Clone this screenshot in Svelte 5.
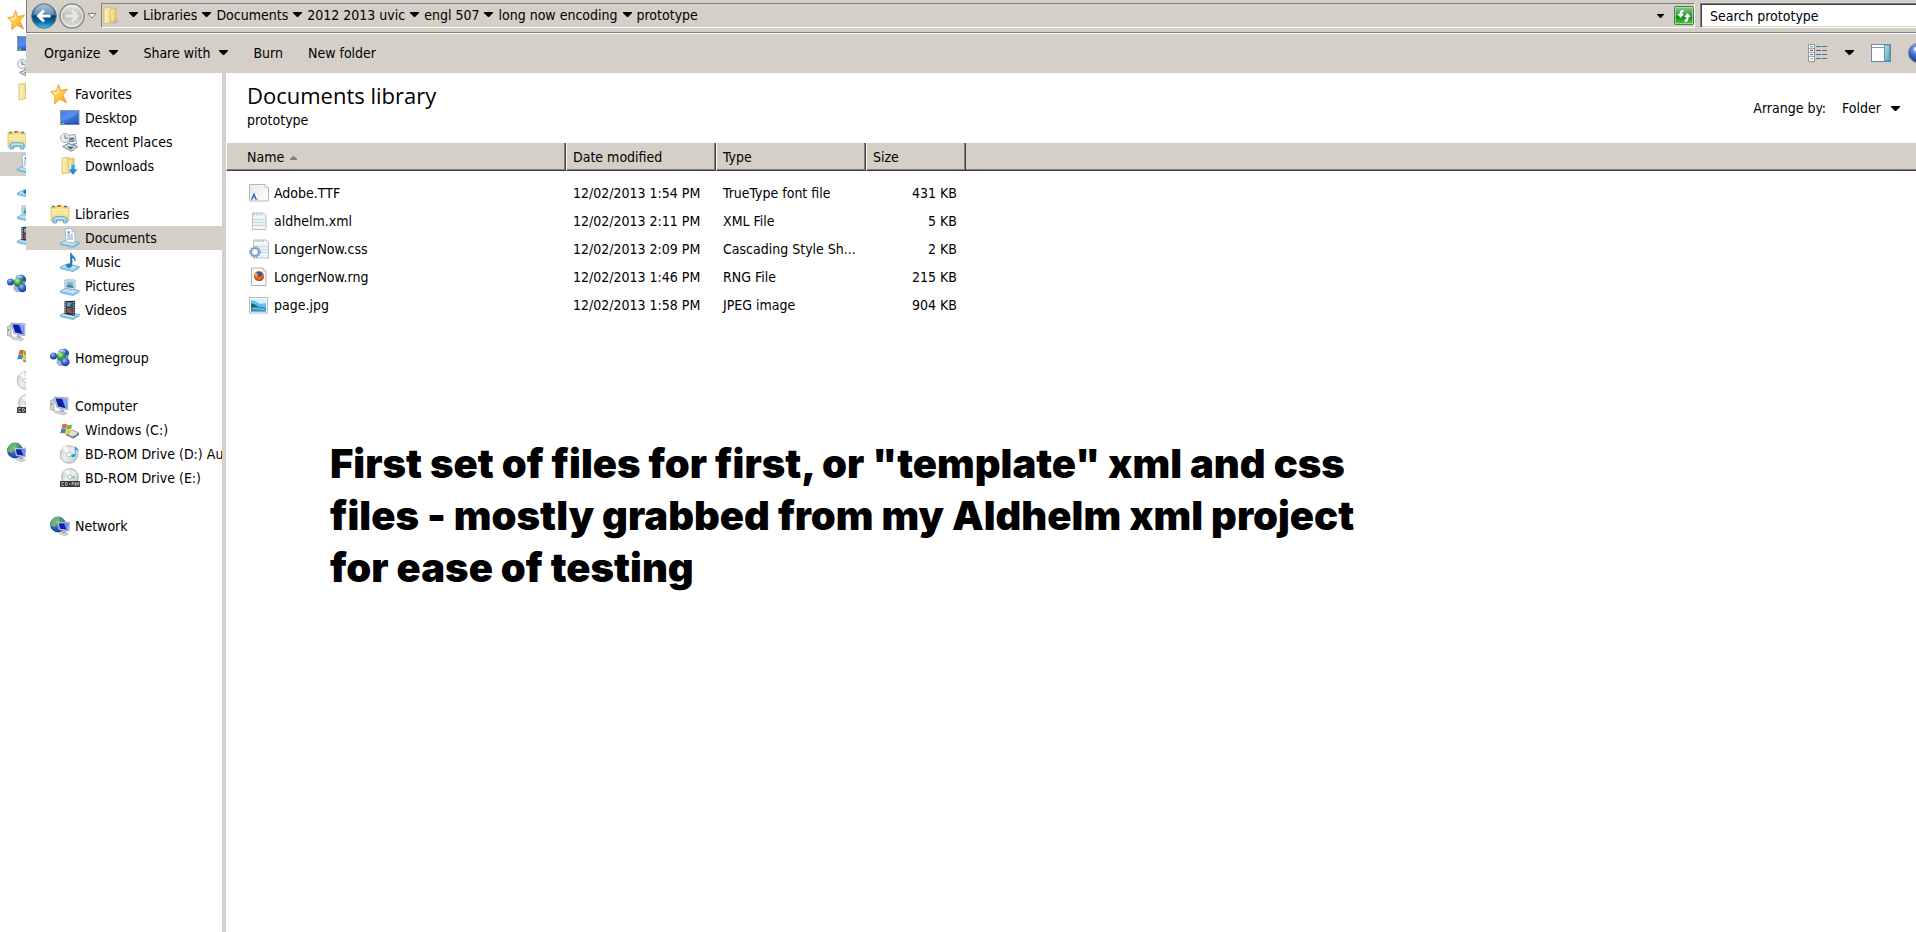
<script>
  const groups = [
    { icon: 'star', label: 'Favorites', items: [
      { icon: 'desktop', label: 'Desktop' },
      { icon: 'recent', label: 'Recent Places' },
      { icon: 'downloads', label: 'Downloads' } ] },
    { icon: 'libraries', label: 'Libraries', items: [
      { icon: 'documents', label: 'Documents', selected: true },
      { icon: 'music', label: 'Music' },
      { icon: 'pictures', label: 'Pictures' },
      { icon: 'videos', label: 'Videos' } ] },
    { icon: 'homegroup', label: 'Homegroup', items: [] },
    { icon: 'computer', label: 'Computer', items: [
      { icon: 'drive', label: 'Windows (C:)' },
      { icon: 'audiodisc', label: 'BD-ROM Drive (D:) Au' },
      { icon: 'cdrom', label: 'BD-ROM Drive (E:)' } ] },
    { icon: 'network', label: 'Network', items: [] }
  ];
  const crumbs = ['Libraries', 'Documents', '2012 2013 uvic', 'engl 507', 'long now encoding', 'prototype'];
  const files = [
    { icon: 'ttf', name: 'Adobe.TTF', date: '12/02/2013 1:54 PM', type: 'TrueType font file', size: '431 KB' },
    { icon: 'xml', name: 'aldhelm.xml', date: '12/02/2013 2:11 PM', type: 'XML File', size: '5 KB' },
    { icon: 'css', name: 'LongerNow.css', date: '12/02/2013 2:09 PM', type: 'Cascading Style Sh...', size: '2 KB' },
    { icon: 'rng', name: 'LongerNow.rng', date: '12/02/2013 1:46 PM', type: 'RNG File', size: '215 KB' },
    { icon: 'jpg', name: 'page.jpg', date: '12/02/2013 1:58 PM', type: 'JPEG image', size: '904 KB' }
  ];
  const note = [
    'First set of files for first, or "template" xml and css',
    'files - mostly grabbed from my Aldhelm xml project',
    'for ease of testing'
  ];
</script>

{#snippet caret()}
  <svg class="caret" viewBox="0 0 9 5" aria-hidden="true"><path d="M0 0h9v1L5 5H4L0 1z" fill="#000" /></svg>
{/snippet}

{#snippet tray()}
  <path d="M0 15.500L6 12.200L19.500 14.500L13 18.500z" fill="#b9e3f7" stroke="#5fa3cc" stroke-width=".8" />
  <path d="M0 16l13 3 6.500-4v1.300L13 20 0 17z" fill="#6db4dc" />
{/snippet}

{#snippet icon(name)}
  <svg class="icon" viewBox="0 0 20 20" aria-hidden="true">
    {#if name === 'star'}
      <path d="M8.500.5l2.300 6.100 6.700-1.500-4.600 6 3.600 7.700-6.600-3.600-5.400 4.600.7-7.600L.5 7.600l6.100-.8z" fill="url(#gStar)" stroke="#e89a32" stroke-width=".9" stroke-linejoin="round" />
      <path d="M8.500 3.500l1.300 4.700-4.500 2.800-2.600-2.500 4.500-.6z" fill="#fff2a8" opacity=".75" />
    {:else if name === 'desktop'}
      <rect x=".5" y="2.500" width="18.500" height="14" fill="url(#gScreen)" stroke="#8c96a8" />
      <path d="M1 13C7 12 13 9 18.500 4V3H1z" fill="#8db8ff" opacity=".35" />
      <path d="M1 15.500h18" stroke="#27509c" stroke-width="1.500" /><path d="M1.500 15.500h3" stroke="#67d05d" stroke-width="1.500" />
    {:else if name === 'recent'}
      <path d="M7.500 3.500L15 2.500l1.500 9-8.500 1.500z" fill="#eef1f4" stroke="#8f9ba5" /><path d="M9 6l5-.7.6 4.200-5 .8z" fill="#64707a" /><path d="M10 9l3.500-1.500" stroke="#bcd3e2" />
      <circle cx="5" cy="6" r="4.500" fill="#e8eef3" stroke="#a7b3bc" /><path d="M5 3v3.300h3" fill="none" stroke="#5b7f99" />
      <path d="M2.500 14.500l6-3 9.500 3-6.500 4.800z" fill="#d3dae0" stroke="#7f8b94" /><path d="M7 14.300l7 .8-3.500 2.500z" fill="#4c5f6d" /><path d="M13 12.500l2.500 1" stroke="#3f94cf" stroke-width="1.500" />
    {:else if name === 'downloads' || name === 'folder'}
      <path d="M2 2l7-.8V16.500L2 18z" fill="#f7e3a0" stroke="#dbbb63" stroke-width=".8" />
      <path d="M8 3.500L14 2v13.500l-5 1.500z" fill="url(#gFolder)" stroke="#d4b056" stroke-width=".8" /><path d="M4 3v14" stroke="#fff6cf" />
      {#if name === 'downloads'}
        <path d="M11 8h4v5h3l-5 6-5-6h3z" fill="url(#gArrow)" stroke="#fff" stroke-width=".5" />
      {:else}
        <path d="M14 13l3.500 2-4.500 3-4-1z" fill="#a9a9a0" opacity=".5" />
      {/if}
    {:else if name === 'libraries'}
      <path d="M1 3h5l1.500-1.500H12L13 3h6v14H1z" fill="#f8df8b" stroke="#d8ba61" stroke-width=".8" />
      <path d="M2 2.500h3" stroke="#3aa93a" stroke-width="1.600" /><path d="M7.500 2h3" stroke="#d83a2a" stroke-width="1.600" /><path d="M14 2.500h3" stroke="#3478c8" stroke-width="1.600" />
      <path d="M1.500 6h17M1.500 9h17" stroke="#fff4c0" />
      <path d="M3 19v-5l2-1.300h10l2 1.300v5h-3.500v-3h-7v3z" fill="#8fd0ee" stroke="#4b9dcc" stroke-width=".8" /><path d="M4.500 14.200h11" stroke="#dbf3fd" />
    {:else if name === 'documents'}
      {@render tray()}
      <path d="M5 1l7-.5 3 3V15L6 14z" fill="#fdfefe" stroke="#93a7b8" stroke-width=".8" /><path d="M12 .5V4h3" fill="#c9d7e2" stroke="#93a7b8" stroke-width=".6" />
      <path d="M7 4h2.500M7 7h6M7 9h6M7 11h6" stroke="#8c9fc9" /><path d="M8 3.500h1.500v2H8z" fill="#4778bd" />
    {:else if name === 'music'}
      {@render tray()}
      <path d="M11 1c1 3 5 4 4 8-.5-2-1.500-3-3-3.500V13c0 3-5.500 3.500-5.500.8 0-2 2.500-2.500 4-1.900V1z" fill="#2484c6" stroke="#176196" stroke-width=".6" />
    {:else if name === 'pictures'}
      {@render tray()}
      <path d="M5 4h10v9.500L5 12.500z" fill="#f3f7fa" stroke="#93a7b8" /><path d="M6.500 5.500h7V12l-7-.8z" fill="#79bce8" /><path d="M6.500 10l3-2 4 2.500V12l-7-.8z" fill="#4c8d77" />
    {:else if name === 'videos'}
      {@render tray()}
      <path d="M4.500 1L15 .7V16L4.500 14z" fill="#26333e" /><path d="M7 2.500h5.500V7L7 6.500z" fill="#6aabcf" /><path d="M7 8l5.500.5v5L7 12.500z" fill="#a75431" /><path d="M10 4l2.500-1v10l-2-3z" fill="#37556a" />
      <path d="M5.700 2v12M13.800 2v13" stroke="#e1e6ea" stroke-width="1" stroke-dasharray="1.200 1.200" />
    {:else if name === 'homegroup'}
      <path d="M8 3.500Q10 .5 14 .8t5 4q.3 3-2 4.200l-3-1-2-4z" fill="url(#gBlue)" /><path d="M10 3q3-2 5 0" fill="none" stroke="#cfe0fb" />
      <path d="M7.500 11q-2 3 0 5.500t5 1.500l-1-5z" fill="#9eb3e6" /><path d="M15 7q3-1 3.500 1.500L17 12z" fill="#6f8edc" />
      <circle cx="3.500" cy="8" r="3.500" fill="url(#gBlue)" />
      <circle cx="11.300" cy="8.500" r="4.600" fill="url(#gGreen)" /><circle cx="15.300" cy="14" r="4.300" fill="url(#gBlue)" />
    {:else if name === 'computer'}
      <path d="M.5 4.500L4 3v11.500L.5 13.500z" fill="#cfd4d8" stroke="#949ca3" stroke-width=".7" /><path d="M1.500 7v2" stroke="#51b84f" />
      <path d="M4 1l14 .8-.3 12L7 11.500z" fill="#dfe4ea" stroke="#7e8b98" stroke-width=".7" /><path d="M5.500 2.300l11.500.6-.3 9.600L8 10.500z" fill="#0a1fae" /><path d="M12 2.700l5 .2-.3 9.600-1.200-.3z" fill="#7fa3f4" />
      <path d="M10 13l4 .8.500 2.500-5-.7z" fill="#aab3bb" /><path d="M4 14.500l8 1.700 5 .8-3 1.800-9-2z" fill="#d5dade" stroke="#a0a8af" stroke-width=".6" />
    {:else if name === 'drive'}
      <path d="M6 13.300l6-3.300 7 3-6 4.200z" fill="#dfe3e6" stroke="#838b91" stroke-width=".8" /><path d="M6 13.300l7 3.400v2L6 15.500z" fill="#8b9399" /><path d="M13 16.700l6-4v2l-6 4z" fill="#62696e" /><path d="M15 15.700l1.500-1" stroke="#6de356" />
      <path d="M2.500 4.500Q4.500 3 7 4.500L6.200 8.700Q3.500 7.500 1.300 9z" fill="#e8642a" /><path d="M7.200 4.600q2.500 1.300 5 0l-1 4.200q-2.500 1.300-4.800.2z" fill="#77b843" />
      <path d="M1.200 9.200Q3.700 7.800 6.100 9l-.9 4.500Q2.700 12.300.2 13.600z" fill="#3b87cf" /><path d="M6.300 9.200q2.500 1.300 4.800 0l-.9 4q-2.300 1.500-4.800.3z" fill="#f5c737" />
    {:else if name === 'audiodisc'}
      <circle cx="9" cy="10.500" r="8.800" fill="url(#gDisc)" stroke="#9fa7ab" stroke-width=".8" /><path d="M9 10.500L2 5A9 9 0 0 1 7 2z" fill="#fff" opacity=".8" /><path d="M9 10.500l5 5a7 7 0 0 1-4 2z" fill="#c9e9b4" opacity=".8" />
      <circle cx="9" cy="10.500" r="2.300" fill="#fff" stroke="#9aa2a7" stroke-width=".7" />
      <path d="M14.500.5c.8 3 5.500 4 4.500 9-.6-2.300-1.500-3-3-3.300V11c0 3.500-5.200 3.500-5.200.8 0-2 2.300-2.500 3.700-1.800z" fill="#2c9be2" stroke="#fff" stroke-width=".5" />
    {:else if name === 'cdrom'}
      <circle cx="10" cy="9" r="8.300" fill="url(#gDisc)" stroke="#8f979c" stroke-width=".8" /><path d="M10 9L4 3.500A8 8 0 0 1 9 1.200z" fill="#fff" opacity=".8" /><path d="M10 9l5-.8v2.300z" fill="#58dc63" />
      <circle cx="10" cy="9" r="2" fill="#fff" stroke="#9aa2a7" stroke-width=".7" />
      <rect y="13" width="20" height="6" rx=".6" fill="#363636" /><path d="M4 14.500H1.800v3H4M5.500 14.500v3h1.500l.8-1.500-.8-1.500zM9 16h1.500M12 17.500v-3h1.500v1.500H12M15 14.500h1v3h-1zM17.200 17.500v-3l.8 1 .8-1v3" fill="none" stroke="#d5d5d5" stroke-width=".7" />
    {:else if name === 'network'}
      <circle cx="8" cy="8.500" r="7.900" fill="url(#gBlue)" /><path d="M2 4.500Q6 0 10 1L9 4 6 5.500 6.500 9 4 11 .7 9z" fill="#6cbd50" /><path d="M10 1l4.500 3L11 6z" fill="#4fa546" />
      <path d="M7.500 6l12 .2-.5 9-10-1.500z" fill="#dfe4ea" stroke="#8894a0" stroke-width=".7" /><path d="M8.800 7.200l9.600.1-.5 6.600-8-1.200z" fill="#0b21b5" /><path d="M14 7.200h4.400l-.5 6.700-1.500-.2z" fill="#6d92ef" />
      <path d="M12.500 15l3.500.3.500 2-5 .2z" fill="#a1abb3" /><path d="M9 17l8 .2 1.500 1.300-5 1.200z" fill="#d4d9dd" stroke="#9aa3aa" stroke-width=".5" />
    {:else if name === 'ttf'}
      <path d="M.5 1.500H16l3.500 3V18H.5z" fill="url(#gPaper)" stroke="#b4b8bd" /><path d="M16 1.500v3h3.500" fill="#fff" stroke="#b4b8bd" stroke-width=".7" />
      <path d="M2 16h2M6 16h2.500M3 16l2-5 2 5M4 14h2.500" fill="none" stroke="#3458bb" stroke-width="1.100" />
    {:else if name === 'xml'}
      <path d="M3.500 2H14l3 2.500V18.500H3.500z" fill="#f5f8fa" stroke="#b7bfc5" /><path d="M4.500 3.500h9" stroke="#c3c8cd" stroke-dasharray="1.500 1" stroke-width="2" />
      <path d="M4 8.500h12.500M4 11.500h12.500M4 14.500h12.500" stroke="#c7dce8" stroke-width="1.500" />
    {:else if name === 'css'}
      <path d="M4.500 1H17l2.500 2.500V19H4.500z" fill="#f2f6f9" stroke="#b7bfc5" /><path d="M6 2h10" stroke="#c3c8cd" stroke-dasharray="1.500 1" stroke-width="2" />
      <path d="M5 7.500h14M5 10.500h14M5 13.500h14" stroke="#cddfe9" stroke-width="1.500" />
      <circle cx="6" cy="13" r="5" fill="#dce8f2" stroke="#82a3c2" stroke-width="2" stroke-dasharray="1.600 1" /><circle cx="6" cy="13" r="3.700" fill="#e9f1f7" stroke="#7799bb" stroke-width="1.400" /><circle cx="6" cy="13" r="1.500" fill="#fff" />
    {:else if name === 'rng'}
      <path d="M2.500 1H14l3 3V18.500H2.500z" fill="#fbfbfb" stroke="#aeb1b5" /><path d="M14 1v3h3" fill="#e5e7e9" stroke="#b4b7ba" stroke-width=".7" />
      <circle cx="10" cy="9" r="5" fill="#e56a1b" /><path d="M8 5.500Q10 3.800 13 5.500 14 8 12 9.500 9.500 10.500 8.500 8.500z" fill="#2a5fae" /><path d="M5 8Q6 13 10.500 12.700 14 12 15 8.500 15 14 10 14 5 13.500 5 8z" fill="#c23b12" /><path d="M6 5.500l3 2-1 2-2.500-1z" fill="#f7a12c" />
    {:else if name === 'jpg'}
      <rect x=".5" y="2.500" width="18" height="15.500" fill="#fdfdfd" stroke="#b4b8bc" /><rect x="2" y="4" width="15" height="12.500" fill="#66bdf0" />
      <path d="M2 5q6 1 9 4l6-1V4H2z" fill="#d2efff" /><path d="M2 8.500q4 0 7 3l-2 2H2z" fill="#256b60" /><path d="M2 12.500l7-1 8 1v4H2z" fill="#2b93bf" /><path d="M4 13.500l12 1" stroke="#7fd6ee" />
    {/if}
  </svg>
{/snippet}

<svg class="paints" aria-hidden="true">
  <defs>
    <linearGradient id="gStar" x1="0" y1="0" x2="1" y2="1"><stop offset="0" stop-color="#ffe991" /><stop offset=".6" stop-color="#fdc53c" /><stop offset="1" stop-color="#f08a1c" /></linearGradient>
    <linearGradient id="gScreen" x1="0" y1="0" x2="1" y2="1"><stop offset="0" stop-color="#2c5fd0" /><stop offset=".5" stop-color="#3c78e6" /><stop offset="1" stop-color="#2150b8" /></linearGradient>
    <linearGradient id="gFolder" x1="0" y1="0" x2="1" y2="0"><stop offset="0" stop-color="#fdf0bd" /><stop offset="1" stop-color="#e9c76c" /></linearGradient>
    <linearGradient id="gArrow" x1="0" y1="0" x2="0" y2="1"><stop offset="0" stop-color="#4cb4ee" /><stop offset="1" stop-color="#1275c4" /></linearGradient>
    <linearGradient id="gPaper" x1="0" y1="0" x2="1" y2="1"><stop offset="0" stop-color="#e6e9ec" /><stop offset="1" stop-color="#fff" /></linearGradient>
    <linearGradient id="gDisc" x1="0" y1="0" x2="1" y2="1"><stop offset="0" stop-color="#c8cdd0" /><stop offset=".5" stop-color="#eceff0" /><stop offset="1" stop-color="#b5bbbf" /></linearGradient>
    <radialGradient id="gBlue" cx=".4" cy=".3" r=".7"><stop offset="0" stop-color="#a9c6f8" /><stop offset=".5" stop-color="#3a66c9" /><stop offset="1" stop-color="#173a94" /></radialGradient>
    <radialGradient id="gGreen" cx=".4" cy=".3" r=".7"><stop offset="0" stop-color="#c6f3bb" /><stop offset=".5" stop-color="#3da944" /><stop offset="1" stop-color="#17702a" /></radialGradient>
    <linearGradient id="gBack" x1="0" y1="0" x2="0" y2="1"><stop offset="0" stop-color="#9fb9cf" /><stop offset=".45" stop-color="#2a679d" /><stop offset=".5" stop-color="#053d70" /><stop offset=".75" stop-color="#0a6ba8" /><stop offset="1" stop-color="#36d0f7" /></linearGradient>
    <linearGradient id="gForward" x1="0" y1="0" x2="0" y2="1"><stop offset="0" stop-color="#ecebe8" /><stop offset=".5" stop-color="#bdbbb7" /><stop offset="1" stop-color="#e6e4e0" /></linearGradient>
    <linearGradient id="gRefresh" x1="0" y1="0" x2="0" y2="1"><stop offset="0" stop-color="#8fcf8d" /><stop offset=".5" stop-color="#2f9b35" /><stop offset=".55" stop-color="#0b8512" /><stop offset="1" stop-color="#4fd23f" /></linearGradient>
    <linearGradient id="gPane" x1="0" y1="0" x2="1" y2="1"><stop offset="0" stop-color="#b6e2f2" /><stop offset="1" stop-color="#4e9fc2" /></linearGradient>
  </defs>
</svg>

<div class="screen">
  <div class="behind" aria-hidden="true">
    {#each groups as group}
      <div class="group">
        <div class="row head">{@render icon(group.icon)}</div>
        {#each group.items as item}
          <div class="row child" class:selected={item.selected}>{@render icon(item.icon)}</div>
        {/each}
      </div>
    {/each}
  </div>

  <div class="window">
    <header class="addressbar">
      <div class="travel">
        <button aria-label="Back">
          <svg viewBox="0 0 26 26"><circle cx="13" cy="13" r="12.300" fill="url(#gBack)" stroke="#5c7184" /><path d="M3 12a10 10 0 0 1 20 0q-10-3-20 0z" fill="#fff" opacity=".25" /><path d="M19.500 13H8.500M13 7.500L7.500 13l5.500 5.500" fill="none" stroke="#fff" stroke-width="3" /></svg>
        </button>
        <button aria-label="Forward">
          <svg viewBox="0 0 26 26"><circle cx="13" cy="13" r="12" fill="url(#gForward)" stroke="#85898c" stroke-width="1.500" /><circle cx="13" cy="13" r="10.700" fill="none" stroke="#f3f2f0" /><path d="M6.500 13h11M13 7.500l5.500 5.500-5.500 5.500" fill="none" stroke="#e8e6e3" stroke-width="3" /></svg>
        </button>
        <button class="recent" aria-label="Recent pages">
          <svg viewBox="0 0 10 6"><path d="M1 .5h8L5 5z" fill="#fff" stroke="#7d7d7d" /></svg>
        </button>
      </div>
      <nav class="crumbs" aria-label="Address">
        {@render icon('folder')}
        <ol>
          {#each crumbs as crumb}
            <li>{@render caret()}<a href="#{crumb}">{crumb}</a></li>
          {/each}
        </ol>
        <button class="history" aria-label="Previous locations">
          <svg viewBox="0 0 7 4"><path d="M0 0h7v.5L4 4H3L0 .5z" fill="#000" /></svg>
        </button>
        <button class="refresh" aria-label="Refresh">
          <svg viewBox="0 0 20 20"><rect x=".5" y=".5" width="19" height="18" rx="1" fill="url(#gRefresh)" stroke="#4f7f51" /><path d="M1.500 1.500h17v16h-17z" fill="none" stroke="#b9e7b5" opacity=".7" /><path d="M9.500 4Q5.500 3.500 5.500 8H3.300l3.400 4L10 8H8q0-2 1.500-2z" fill="#fff" /><path d="M10.500 16q4.200.5 4.200-5h2.200l-3.400-4-3.400 4h2.100q0 3-1.700 3z" fill="#fff" /></svg>
        </button>
      </nav>
      <input class="search" type="text" placeholder="Search prototype" aria-label="Search prototype" />
    </header>

    <div class="toolbar">
      <button>Organize {@render caret()}</button>
      <button>Share with {@render caret()}</button>
      <button>Burn</button>
      <button>New folder</button>
      <div class="tools">
        <button aria-label="Change your view">
          <svg class="tool" viewBox="0 0 20 18"><rect x=".5" y=".5" width="6" height="17" fill="#fff" stroke="#9098a2" /><path d="M1 4.500h5M1 8.500h5M1 12.500h5" stroke="#9098a2" stroke-width=".8" /><path d="M2 2.700h3" stroke="#58a05d" stroke-width="1.200" /><path d="M2 6.500h3" stroke="#e32a24" stroke-width="1.300" /><path d="M2 10.500h3" stroke="#3e94dc" stroke-width="1.300" /><path d="M2 14.700h3" stroke="#b9c832" stroke-width="1.300" /><path d="M8 2.500h5M14 2.500h5M8 6.500h5M14 6.500h5M8 10.500h5M14 10.500h5M8 14.500h5M14 14.500h5" stroke="#5b6c88" /></svg>
        </button>
        <button aria-label="More view options">{@render caret()}</button>
        <button aria-label="Show the preview pane">
          <svg class="tool" viewBox="0 0 20 18"><rect x=".5" y=".5" width="19" height="17" fill="#fff" stroke="#7286a6" /><path d="M1 3.500h12" stroke="#8598b5" /><rect x="13.500" y="1" width="5.500" height="16" fill="url(#gPane)" stroke="#5286a6" stroke-width=".8" /></svg>
        </button>
        <button aria-label="Get help">
          <svg class="help" viewBox="0 0 20 20"><circle cx="10" cy="10" r="9.500" fill="url(#gBlue)" stroke="#6d7f9d" /><path d="M7 7.500q0-3 3-3t3 2.700q0 1.700-1.800 2.700-1.200.8-1.200 2.300M10 13.800v2.200" fill="none" stroke="#fff" stroke-width="2" /></svg>
        </button>
      </div>
    </div>

    <div class="body">
      <nav class="tree" aria-label="Folders">
        {#each groups as group}
          <div class="group">
            <a class="row head" href="#{group.icon}">{@render icon(group.icon)}<span>{group.label}</span></a>
            {#each group.items as item}
              <a class="row child" class:selected={item.selected} href="#{item.icon}">{@render icon(item.icon)}<span>{item.label}</span></a>
            {/each}
          </div>
        {/each}
      </nav>

      <main>
        <div class="library">
          <div>
            <h1>Documents library</h1>
            <p>prototype</p>
          </div>
          <div class="arrange">
            <span>Arrange by:</span>
            <button>Folder {@render caret()}</button>
          </div>
        </div>

        <table>
          <colgroup><col class="c-name" /><col class="c-mid" /><col class="c-mid" /><col class="c-size" /><col /></colgroup>
          <thead>
            <tr>
              <th>Name <svg class="sort" viewBox="0 0 7 4" aria-hidden="true"><path d="M3 0h1l3 3v1H0V3z" fill="#848079" /></svg></th>
              <th>Date modified</th>
              <th>Type</th>
              <th>Size</th>
              <td></td>
            </tr>
          </thead>
          <tbody>
            {#each files as file}
              <tr>
                <td><div class="file">{@render icon(file.icon)}{file.name}</div></td>
                <td>{file.date}</td>
                <td>{file.type}</td>
                <td class="size">{file.size}</td>
                <td></td>
              </tr>
            {/each}
          </tbody>
        </table>

        <p class="note">
          {#each note as line}<span>{line}</span>{/each}
        </p>
      </main>
    </div>
  </div>
</div>

<style>
  :global(body) { margin: 0; background: #fff; }
  .screen {
    --face: #d4d0c8;
    --shadow: #808080;
    --dark: #404040;
    display: flex;
    min-height: 100vh;
    overflow: hidden;
    color: #000;
    font: 14px/20px "DejaVu Sans Condensed", "Noto Sans", sans-serif;
  }
  .screen * { box-sizing: border-box; }
  .paints { position: absolute; width: 0; height: 0; }
  button { padding: 0; border: 0; background: none; color: inherit; font: inherit; white-space: nowrap; }
  a { color: inherit; text-decoration: none; }
  svg { display: block; flex: none; }
  .icon { width: 20px; height: 20px; }
  .caret { width: 9px; height: 5px; }

  .behind { flex: 0 0 26px; overflow: hidden; padding-top: 8px; }
  .behind .head { padding-left: 7px; }
  .behind .child { padding-left: 17px; }
  .group { margin-bottom: 24px; }
  .row { display: flex; align-items: center; gap: 5px; height: 24px; white-space: nowrap; }
  .row.selected { background: var(--face); }

  .window { flex: 1; min-width: 0; display: flex; flex-direction: column; }
  .addressbar {
    display: flex;
    gap: 5px;
    height: 33px;
    padding: 3px 0 4px 4px;
    background: var(--face);
    border-left: 1px solid var(--shadow);
    border-bottom: 1px solid var(--shadow);
  }
  .travel { display: flex; align-items: center; gap: 2px; margin-right: -1px; }
  .travel button svg { width: 26px; height: 26px; }
  .travel .recent svg { width: 10px; height: 6px; }
  .crumbs {
    flex: 1;
    min-width: 0;
    display: flex;
    align-items: center;
    gap: 7px;
    border: 1px solid #fff;
    border-top-color: var(--shadow);
    border-left-color: var(--shadow);
    white-space: nowrap;
  }
  ol, li { display: flex; align-items: center; gap: 5px; margin: 0; padding: 0; list-style: none; }
  ol { padding-bottom: 2px; }
  .history { margin-left: auto; }
  .history svg { width: 7px; height: 4px; }
  .refresh { margin-left: 3px; }
  .refresh svg { width: 20px; height: 20px; }
  .search {
    flex: 0 0 216px;
    min-width: 0;
    padding: 0 0 0 9px;
    border: 1px solid var(--shadow);
    border-right: 0;
    border-bottom-color: #fff;
    border-radius: 0;
    background: #fff;
    box-shadow: inset 1px 1px var(--dark), inset 0 -1px var(--face);
    font: inherit;
  }
  .search::placeholder { color: #000; opacity: 1; }

  .toolbar {
    display: flex;
    align-items: center;
    gap: 25px;
    height: 40px;
    padding: 0 0 2px 18px;
    background: var(--face);
    border-top: 1px solid #fff;
  }
  .toolbar > button { display: flex; align-items: center; gap: 9px; }
  .tools { display: flex; align-items: center; gap: 17px; margin-left: auto; margin-right: -12px; }
  .tool { width: 20px; height: 18px; }
  .help { width: 20px; height: 20px; }

  .body { flex: 1; display: flex; }
  .tree { flex: 0 0 200px; overflow: hidden; padding-top: 9px; border-right: 4px solid var(--face); }
  .tree .head { padding-left: 24px; }
  .tree .child { padding-left: 34px; }
  main { flex: 1; min-width: 0; }
  .library { display: flex; justify-content: space-between; align-items: center; height: 70px; padding: 0 16px 0 21px; }
  h1 { margin: 0; font: 400 22px/24px "Open Sans", "Noto Sans", sans-serif; }
  .library p { margin: 3px 0; }
  .arrange { display: flex; gap: 16px; }
  .arrange button { display: flex; align-items: center; gap: 10px; }

  table { width: 100%; table-layout: fixed; border-collapse: separate; border-spacing: 0; }
  .c-name { width: 340px; }
  .c-mid { width: 150px; }
  .c-size { width: 100px; }
  th, td { padding: 0 6px; text-align: left; font-weight: 400; white-space: nowrap; }
  thead th, thead td { height: 28px; padding-top: 1px; background: var(--face); border-bottom: 1px solid var(--dark); box-shadow: inset 0 -1px var(--shadow); }
  thead th { border-right: 1px solid var(--dark); border-left: 1px solid #fff; box-shadow: inset -1px -1px var(--shadow); }
  th:first-child { padding-left: 20px; }
  tbody td { height: 28px; padding-left: 7px; }
  tbody tr:first-child td { height: 36px; padding-top: 8px; }
  tbody td:first-child { padding-left: 23px; }
  .file { display: flex; align-items: center; gap: 5px; }
  td.size { text-align: right; padding-right: 9px; }
  .sort { display: inline-block; width: 7px; height: 4px; margin-left: 2px; vertical-align: middle; }

  .note { margin: 119px 0 0 104px; font: 900 40px/52px Inter, "Liberation Sans", sans-serif; white-space: nowrap; }
  .note span { display: block; }
</style>
